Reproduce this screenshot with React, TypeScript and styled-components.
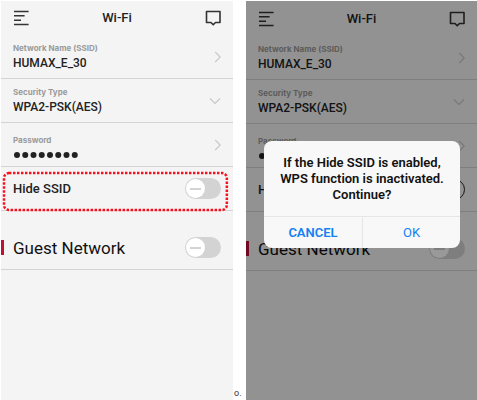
import React, { useId } from "react";
import styled, { createGlobalStyle } from "styled-components";

const GlobalStyle = createGlobalStyle`
  * { box-sizing: border-box; }
  body {
    margin: 0;
    background: #fff;
    font-family: Roboto, "Liberation Sans", sans-serif;
    color: #222;
  }
  button, input { font: inherit; color: inherit; }
`;

const Page = styled.main`
  display: grid;
  grid-template-columns: 232fr 13px 231fr;
  min-height: 100vh;
  padding: 1px 0 0 1px;
`;

const Screen = styled.section<{ $inset?: boolean }>`
  position: relative;
  background: #f4f4f4;
  min-width: 0;
  padding-top: ${(p) => (p.$inset ? 1 : 0)}px;
`;

const Gutter = styled.div`
  align-self: end;
  padding: 0 0 1px 1px;
  font-size: 9px;
  line-height: 12px;
  color: #333;
`;

const TopBar = styled.header`
  display: grid;
  grid-template-columns: 1fr auto 1fr;
  align-items: center;
  height: 34px;
  padding: 0 12px;
`;

const Title = styled.h1`
  margin: 0;
  font-size: 13px;
  line-height: 16px;
  font-weight: 500;
`;

const IconButton = styled.button<{ $end?: boolean }>`
  justify-self: ${(p) => (p.$end ? "end" : "start")};
  display: flex;
  padding: 0;
  border: 0;
  background: none;
`;

const Row = styled.div`
  position: relative;
  display: flex;
  align-items: center;
  justify-content: space-between;
  height: 44px;
  padding: 0 12px;
  border-bottom: 1px solid #d4d4d4;
`;

const FieldButton = styled.button`
  flex: 1;
  display: flex;
  align-items: center;
  justify-content: space-between;
  padding: 0;
  border: 0;
  background: none;
  text-align: left;
`;

const FieldText = styled.span<{ $low?: boolean }>`
  display: flex;
  flex-direction: column;
  padding-top: ${(p) => (p.$low ? 8 : 1)}px;
`;

const FieldLabel = styled.span`
  font-family: Inter, "Liberation Sans", sans-serif;
  font-size: 8px;
  line-height: 12px;
  font-weight: 700;
  color: #9a9a9a;
`;

const FieldValue = styled.span`
  font-size: 12px;
  line-height: 18px;
  font-weight: 500;
`;

const RowLabel = styled.label`
  font-size: 13px;
  line-height: 18px;
  font-weight: 500;
`;

const GuestRow = styled(Row)`
  height: 59px;
  padding-top: 15px;
`;

const GuestLabel = styled.label`
  font-size: 17px;
  line-height: 22px;
  color: #111;
`;

const Marker = styled.span`
  position: absolute;
  left: 0;
  bottom: 14px;
  width: 3px;
  height: 15px;
  background: #be1039;
`;

const Switch = styled.input`
  appearance: none;
  position: relative;
  flex: none;
  width: 36px;
  height: 21px;
  margin: 0;
  border-radius: 11px;
  background: #d3d3d3;

  &::before {
    content: "";
    position: absolute;
    left: 1px;
    top: 1px;
    width: 19px;
    height: 19px;
    border-radius: 50%;
    background: linear-gradient(#d3d3d3, #d3d3d3) center / 11px 2px no-repeat #fff;
  }

  &:checked {
    background: #f4f4f4;
    border: 1px solid #222;
  }
  &:checked::before {
    left: 14px;
    top: 0;
    background: #f4f4f4;
  }
`;

const Highlight = styled.svg`
  position: absolute;
  left: 1px;
  top: 4px;
  width: calc(100% - 6px);
  height: 40px;
  overflow: visible;
  pointer-events: none;
`;

const Scrim = styled.div`
  position: absolute;
  inset: 0;
  background: rgba(0, 0, 0, 0.4);
`;

const Dialog = styled.div`
  position: absolute;
  top: 140px;
  left: 18px;
  right: 17px;
  border-radius: 8px;
  background: #f8f8f8;
  overflow: hidden;
  text-align: center;
`;

const Message = styled.p`
  margin: 0;
  padding: 14px 12px 13px;
  font-size: 13px;
  line-height: 16px;
  font-weight: 600;
  color: #111;
`;

const Actions = styled.div`
  display: grid;
  grid-template-columns: 1fr 1fr;
  border-top: 1px solid #e6e6e6;
`;

const Action = styled.button<{ $strong?: boolean }>`
  height: 31px;
  padding: 0;
  border: 0;
  background: none;
  font-size: 13px;
  font-weight: ${(p) => (p.$strong ? 600 : 400)};
  color: #1480f5;

  & + & { border-left: 1px solid #e6e6e6; }
`;

const MenuIcon = () => (
  <svg width="16" height="16" viewBox="0 0 16 16" fill="none" stroke="#333" strokeWidth="1.6">
    <path d="M1 1.5H15.6M1 5.8H11.6M1 10.2H8M1 14.5H15.6" />
  </svg>
);

const ChatIcon = () => (
  <svg width="16" height="16" viewBox="0 0 16 16" fill="none" stroke="#333" strokeWidth="1.6" strokeLinejoin="round">
    <path d="M1.5 1.5H15V12.5H10.5L8.2 14.8L6 12.5H1.5Z" />
  </svg>
);

const Chevron = ({ down }: { down?: boolean }) => (
  <svg width="12" height="12" viewBox="0 0 12 12" fill="none" stroke="#c8c8c8" strokeWidth="1.2">
    <path d={down ? "M1 3.5L6 8.5L11 3.5" : "M6.2 1L11.2 6L6.2 11"} />
  </svg>
);

const PasswordDots = () => (
  <svg width="66" height="18" viewBox="0 0 66 18" fill="#222">
    {Array.from({ length: 8 }, (_, i) => (
      <circle key={i} cx={4 + i * 8.25} cy="9" r="3" />
    ))}
  </svg>
);

type FieldProps = { label: string; value: React.ReactNode; down?: boolean; low?: boolean };

function Field({ label, value, down, low }: FieldProps) {
  return (
    <Row>
      <FieldButton type="button">
        <FieldText $low={low}>
          <FieldLabel>{label}</FieldLabel>
          {value}
        </FieldText>
        <Chevron down={down} />
      </FieldButton>
    </Row>
  );
}

type ScreenProps = { hidden?: boolean; highlight?: boolean; inset?: boolean; children?: React.ReactNode };

function WifiScreen({ hidden, highlight, inset, children }: ScreenProps) {
  const id = useId();
  return (
    <Screen $inset={inset}>
      <TopBar>
        <IconButton type="button" aria-label="Menu"><MenuIcon /></IconButton>
        <Title>Wi-Fi</Title>
        <IconButton type="button" aria-label="Messages" $end><ChatIcon /></IconButton>
      </TopBar>
      <Field label="Network Name (SSID)" value={<FieldValue>HUMAX_E_30</FieldValue>} />
      <Field label="Security Type" value={<FieldValue>WPA2-PSK(AES)</FieldValue>} down />
      <Field label="Password" value={<PasswordDots />} low />
      <Row>
        <RowLabel htmlFor={`${id}-hide`}>Hide SSID</RowLabel>
        <Switch id={`${id}-hide`} type="checkbox" defaultChecked={hidden} />
        {highlight && (
          <Highlight aria-hidden="true">
            <rect x="2" y="2" width="98.6%" height="37" rx="5" fill="none" stroke="#f8101c" strokeWidth="2.5" strokeDasharray="2.4 1.6" />
          </Highlight>
        )}
      </Row>
      <GuestRow>
        <Marker />
        <GuestLabel htmlFor={`${id}-guest`}>Guest Network</GuestLabel>
        <Switch id={`${id}-guest`} type="checkbox" />
      </GuestRow>
      {children}
    </Screen>
  );
}

export default function App() {
  return (
    <>
      <GlobalStyle />
      <Page>
        <WifiScreen highlight />
        <Gutter>o.</Gutter>
        <WifiScreen hidden inset>
          <Scrim />
          <Dialog role="alertdialog" aria-modal="true" aria-labelledby="hide-message">
            <Message id="hide-message">
              If the Hide SSID is enabled,<br />WPS function is inactivated.<br />Continue?
            </Message>
            <Actions>
              <Action type="button" $strong>CANCEL</Action>
              <Action type="button">OK</Action>
            </Actions>
          </Dialog>
        </WifiScreen>
      </Page>
    </>
  );
}
